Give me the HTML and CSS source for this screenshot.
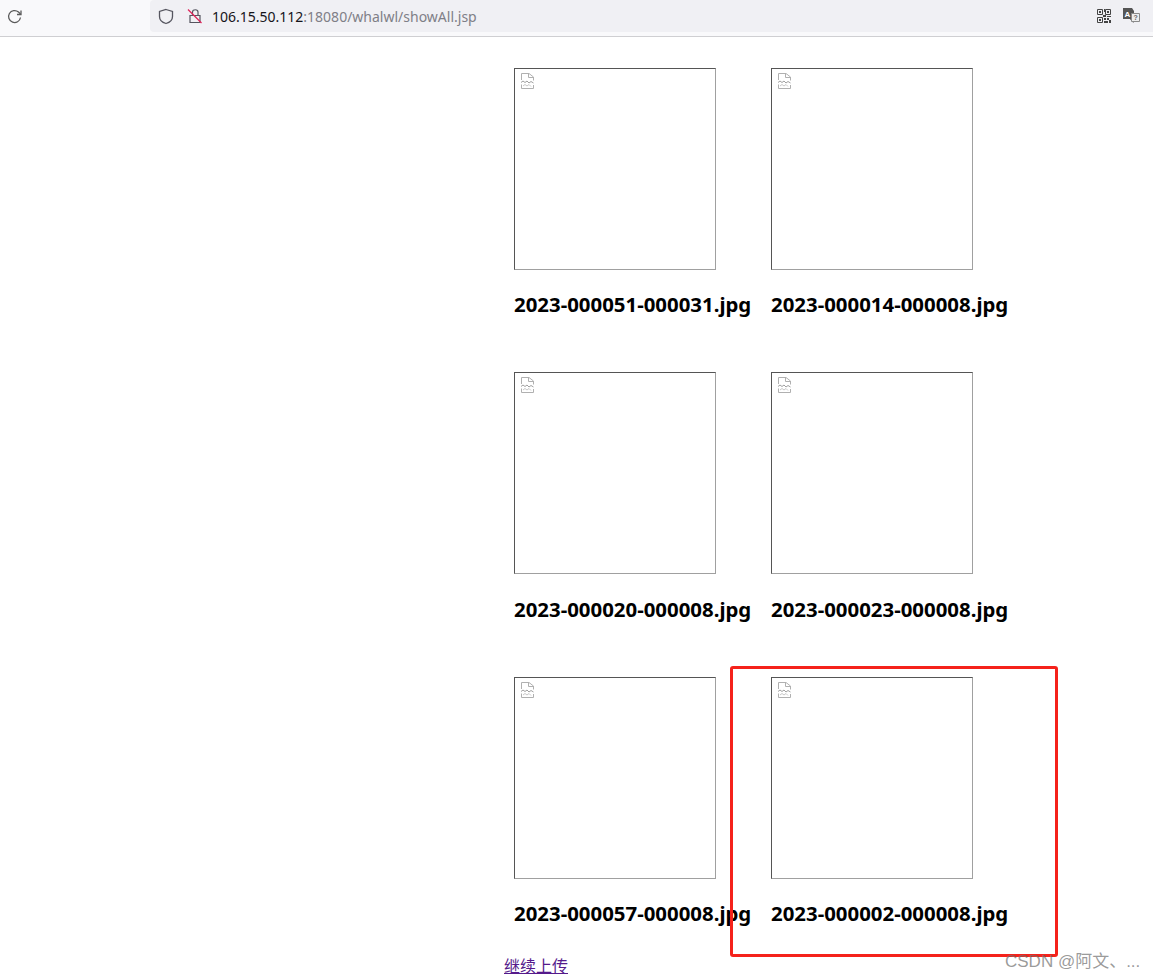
FILE: index.html
```html
<!DOCTYPE html>
<html lang="en">
<head>
    <meta charset="UTF-8">
    <meta name="viewport" content="width=device-width, initial-scale=1.0">
    <title>showAll</title>
    <link rel="stylesheet" href="styles.css">
</head>
<body>
    <svg class="defs" width="0" height="0">
        <symbol id="broken" viewBox="0 0 14 16">
            <path d="M1.500 7V.5H9L13.500 4V7.500M8.500 .5V4.500H13.500" fill="none" stroke="#b0b0b0"/>
            <path d="M1 9.500L3 8 5 9.500 7 8 9 10 11 8.500 13.500 10" fill="none" stroke="#a0a0a0"/>
            <path d="M1.500 11.500V15.500H13.500V12" fill="none" stroke="#b0b0b0"/>
            <path d="M3 13L5 11.500 7 13 9 11.500 11 13.500" fill="none" stroke="#c8c8c8"/>
        </symbol>
    </svg>

    <header class="toolbar">
        <svg class="reload" width="16" height="16" viewBox="0 0 16 16">
            <path d="M13.500 8.500A6 6 0 1 1 11.500 3L13.500 5" fill="none" stroke="#5a5a5a" stroke-width="1.300"/>
            <path d="M14 1.500V5.500H10" fill="none" stroke="#5a5a5a" stroke-width="1.300"/>
        </svg>
        <div class="address">
            <svg class="shield" width="16" height="17" viewBox="0 0 16 17">
                <path d="M8 1.500L14.500 3.500V8.500C14.500 12 11.500 14.500 8 15.500C4.500 14.500 1.500 12 1.500 8.500V3.500Z" fill="none" stroke="#55555f" stroke-width="1.300"/>
            </svg>
            <svg class="lock" width="16" height="16" viewBox="0 0 16 16">
                <path d="M5.500 7V4C5.500 1 11 1 11 4V7M3 7.500H13V14.500H3Z" fill="none" stroke="#55555f" stroke-width="1.200"/>
                <path d="M1 1.500L14.500 15" stroke="#e0255a" stroke-width="1.200"/>
            </svg>
            <span class="url"><span class="host">106.15.50.112</span>:18080/whalwl/showAll.jsp</span>
            <div class="actions">
                <svg width="14" height="14" viewBox="0 0 14 14">
                    <path d="M.5 .5H5.500V5.500H.5ZM8.500 .5H13.500V5.500H8.500ZM.5 8.500H5.500V13.500H.5Z" fill="none" stroke="#444"/>
                    <path d="M2 2H4V4H2ZM10 2H12V4H10ZM2 10H4V12H2ZM7 0H8V3H7ZM6 6H9V8H6ZM10 7H14V8H10ZM7 9H9V11H7ZM10 9H12V11H10ZM12 11H14V14H12ZM7 12H11V14H7Z" fill="#444"/>
                </svg>
                <svg width="18" height="16" viewBox="0 0 18 16">
                    <path d="M0 0H9L11 3V11H0Z" fill="#555"/>
                    <path d="M7 11L10.500 15V11Z" fill="#333"/>
                    <path d="M8.500 5.500H16.500V13.500H8.500Z" fill="#eee" stroke="#8a8a8a"/>
                    <text x="1.500" y="8.500" class="glyph">A</text>
                    <text x="10.500" y="12" class="glyph glyph-small">?</text>
                </svg>
            </div>
        </div>
    </header>

    <main class="content">
        <div class="gallery">
            <figure class="item">
                <div class="thumb"><svg width="14" height="16"><use href="#broken"/></svg></div>
                <figcaption>2023-000051-000031.jpg</figcaption>
            </figure>
            <figure class="item">
                <div class="thumb"><svg width="14" height="16"><use href="#broken"/></svg></div>
                <figcaption>2023-000014-000008.jpg</figcaption>
            </figure>
            <figure class="item">
                <div class="thumb"><svg width="14" height="16"><use href="#broken"/></svg></div>
                <figcaption>2023-000020-000008.jpg</figcaption>
            </figure>
            <figure class="item">
                <div class="thumb"><svg width="14" height="16"><use href="#broken"/></svg></div>
                <figcaption>2023-000023-000008.jpg</figcaption>
            </figure>
            <figure class="item">
                <div class="thumb"><svg width="14" height="16"><use href="#broken"/></svg></div>
                <figcaption>2023-000057-000008.jpg</figcaption>
            </figure>
            <figure class="item">
                <div class="thumb"><svg width="14" height="16"><use href="#broken"/></svg></div>
                <figcaption>2023-000002-000008.jpg</figcaption>
            </figure>
        </div>
        <a class="more" href="#">继续上传</a>
    </main>

    <div class="highlight"></div>
    <div class="watermark">CSDN @阿文、...</div>
</body>
</html>
```

FILE: styles.css
```css
html, body {
    height: 100%;
}
body {
    margin: 0;
    background-color: #ffffff;
    font-family: "Noto Sans", "Noto Sans CJK SC", sans-serif;
    overflow: hidden;
    position: relative;
}
.defs {
    position: absolute;
}
.toolbar {
    height: 36px;
    display: flex;
    background-color: #f9f9fb;
    border-bottom: 1px solid #cfcfd2;
}
.reload {
    margin: 9px 0 0 7px;
}
.address {
    flex: 1;
    height: 32px;
    margin-left: 127px;
    padding: 0 12px 0 8px;
    display: flex;
    align-items: center;
    background-color: #f0f0f4;
    border-radius: 4px 0 0 4px;
}
.shield {
    margin-right: 13px;
}
.lock {
    margin-right: 9px;
}
.url {
    font-family: "Noto Sans", sans-serif;
    font-size: 14px;
    color: #7f7f87;
}
.host {
    color: #15141a;
}
.actions {
    margin-left: auto;
    display: flex;
    align-items: center;
    gap: 12px;
}
.glyph {
    font-family: "Liberation Sans", sans-serif;
    font-size: 8px;
    font-weight: bold;
    fill: #fff;
}
.glyph-small {
    font-size: 7px;
    fill: #666;
}
.content {
    padding: 30.600px 0 0 504px;
}
.gallery {
    display: grid;
    grid-template-columns: 237px 237px;
    column-gap: 20px;
    row-gap: 53.900px;
    margin-left: 10px;
}
.item {
    margin: 0;
}
.thumb {
    box-sizing: border-box;
    width: 202px;
    height: 202px;
    padding: 4px 5px;
    border: 1px solid;
    border-color: #555 #a0a0a0 #a0a0a0 #555;
}
.thumb svg {
    display: block;
}
.item figcaption {
    margin-top: 20.600px;
    font-size: 20.400px;
    line-height: 28px;
    font-weight: bold;
    color: #000;
    white-space: nowrap;
}
.more {
    display: block;
    width: max-content;
    margin-top: 27.400px;
    font-size: 16px;
    line-height: 22px;
    color: #551a8b;
}
.highlight {
    position: absolute;
    left: 730px;
    top: 666px;
    width: 322px;
    height: 285px;
    border: 3px solid #f5221b;
    border-radius: 3px;
}
.watermark {
    position: absolute;
    left: 1005px;
    top: 951px;
    font-family: "Liberation Sans", "Noto Sans CJK SC", sans-serif;
    font-size: 17px;
    line-height: 22px;
    color: rgba(110, 110, 110, 0.700);
    white-space: nowrap;
}
```
